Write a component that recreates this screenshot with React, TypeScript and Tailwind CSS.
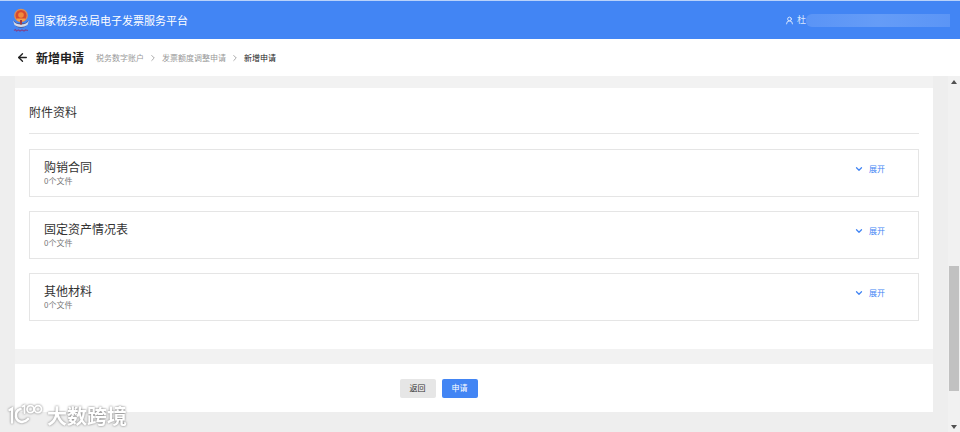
import { ArrowLeft, ChevronDown, ChevronRight, UserRound } from "lucide-react";

const crumbs = ["税务数字账户", "发票额度调整申请"];

const attachments = [
  { name: "购销合同", count: 0 },
  { name: "固定资产情况表", count: 0 },
  { name: "其他材料", count: 0 },
];

function TaxEmblem() {
  return (
    <svg viewBox="0 0 18 25" className="h-[25px] w-[18px] shrink-0" aria-hidden="true">
      <path d="M1.5 12.5C2 17 5 20 9 20s7-3 7.500-7.500l-3 2.500H4.500z" fill="#4b5f9c" />
      <path d="M1 12.500c2 3.200 5 4 8 4s6-.8 8-4l-1.500 4.500c-3.800 2.500-9.200 2.500-13 0z" fill="#d5dbe8" />
      <circle cx="9" cy="7.500" r="6.200" fill="#d8492f" stroke="#d9905a" strokeWidth="1.300" />
      <circle cx="9" cy="7" r="2.800" fill="#f08a3c" />
      <path d="M4.500 10.500h9l-1 2.500h-7z" fill="#f0a04c" />
      <path d="M8 12h2v4.500H8z" fill="#a33a44" />
      <path d="M2 22.500l1.500-1 1 1.500 2-1 1.500 1 2-1 2 1 1.500-1 2.500.5" fill="none" stroke="#7d4590" strokeWidth="1.200" />
    </svg>
  );
}

function TopBar() {
  return (
    <header className="flex h-[39px] items-center justify-between border-t border-[#b9d2fa] bg-[#4285f4] pr-[10px] pl-3 text-white">
      <div className="flex items-center gap-1">
        <TaxEmblem />
        <span className="text-[11px] leading-4">国家税务总局电子发票服务平台</span>
      </div>
      <div className="flex items-center text-[#dbe8fd]">
        <UserRound className="mr-[3px] size-[9px]" strokeWidth={2.5} />
        <span className="text-[9px] leading-3">杜</span>
        <span className="h-[13px] w-[144px] rounded-l-md bg-linear-to-r from-[#5a94f6] via-[#659cf7] to-[#5b95f6]" />
      </div>
    </header>
  );
}

function PageNav() {
  return (
    <nav className="flex h-[37px] items-center bg-white pl-4 text-[8px]" aria-label="导航">
      <button type="button" aria-label="返回上一页" className="text-[#222]">
        <ArrowLeft className="size-[13px]" strokeWidth={2.5} />
      </button>
      <h1 className="ml-[7px] text-[12px] leading-4 font-bold text-[#222]">新增申请</h1>
      <ol className="ml-3 flex items-center gap-1 text-[#999]">
        {crumbs.map((crumb) => (
          <li key={crumb} className="flex items-center gap-1">
            <a href="#">{crumb}</a>
            <ChevronRight className="size-[10px]" strokeWidth={2} />
          </li>
        ))}
        <li className="text-[#222]" aria-current="page">
          新增申请
        </li>
      </ol>
    </nav>
  );
}

function AttachmentRow({ name, count }: { name: string; count: number }) {
  return (
    <li className="flex h-12 items-start justify-between border border-[#e5e5e5] pr-[33px] pl-[14px]">
      <div className="pt-[9px]">
        <h3 className="text-[12px] leading-4 text-[#333]">{name}</h3>
        <p className="text-[8px] leading-3 text-[#777]">{count}个文件</p>
      </div>
      <button type="button" className="mt-[13px] flex items-center gap-[5px] text-[8px] leading-3 text-[#4285f4]">
        <ChevronDown className="size-[10px]" strokeWidth={3} />
        展开
      </button>
    </li>
  );
}

function ScrollTrack() {
  return (
    <div className="flex w-3 shrink-0 flex-col items-center bg-[#f1f1f1]" aria-hidden="true">
      <svg viewBox="0 0 6 4" className="mt-1 h-1 w-[6px]">
        <path d="M0 4l3-4 3 4z" fill="#505050" />
      </svg>
      <div className="grow-[182]" />
      <div className="w-[10px] grow-[125] bg-[#c1c1c1]" />
      <div className="grow-[34]" />
      <svg viewBox="0 0 6 4" className="mb-[3px] h-1 w-[6px]">
        <path d="M0 0l3 4 3-4z" fill="#505050" />
      </svg>
    </div>
  );
}

function Watermark() {
  return (
    <div className="absolute bottom-1 left-2 flex items-center gap-1 text-white drop-shadow-[0_0_1px_#777]">
      <svg viewBox="0 0 35 24" className="h-6 w-[35px]" fill="none" stroke="currentColor" strokeLinecap="round" aria-hidden="true">
        <path d="M1.500 6l2.500-1.500V18.500" strokeWidth="2.400" />
        <path d="M12.500 5C9 6 7.500 9 8 12.500c.8 5.500 7.500 7.500 12 2.500" strokeWidth="2.600" />
        <path d="M14.500 2.500l2-1V9" strokeWidth="1.800" />
        <circle cx="22.500" cy="5.200" r="3.500" strokeWidth="1.800" />
        <circle cx="30" cy="5.200" r="3.500" strokeWidth="1.800" />
      </svg>
      <span className="text-[20px] leading-6 font-bold">大数跨境</span>
    </div>
  );
}

export default function App() {
  return (
    <div className="relative flex min-h-screen flex-col bg-[#eee] font-['Noto_Sans_CJK_SC',sans-serif]">
      <TopBar />
      <PageNav />
      <div className="flex flex-1">
        <main className="flex-1 px-[15px] pb-5">
          <div className="flex flex-col gap-[15px] bg-[#f2f2f2] pt-3">
            <section className="bg-white px-[14px] pt-3 pb-7">
              <h2 className="border-b border-[#e5e5e5] pb-[9px] text-[12px] leading-6 text-[#333]">附件资料</h2>
              <ul className="mt-[15px] flex flex-col gap-[14px]">
                {attachments.map((item) => (
                  <AttachmentRow key={item.name} {...item} />
                ))}
              </ul>
            </section>
            <footer className="flex h-12 items-center justify-center gap-[6px] bg-white pr-[71px] text-[8px]">
              <button type="button" className="h-[19px] w-9 rounded-xs bg-[#e6e6e6] text-[#333]">
                返回
              </button>
              <button type="button" className="h-[19px] w-9 rounded-xs bg-[#4285f4] text-white">
                申请
              </button>
            </footer>
          </div>
        </main>
        <ScrollTrack />
      </div>
      <Watermark />
    </div>
  );
}
